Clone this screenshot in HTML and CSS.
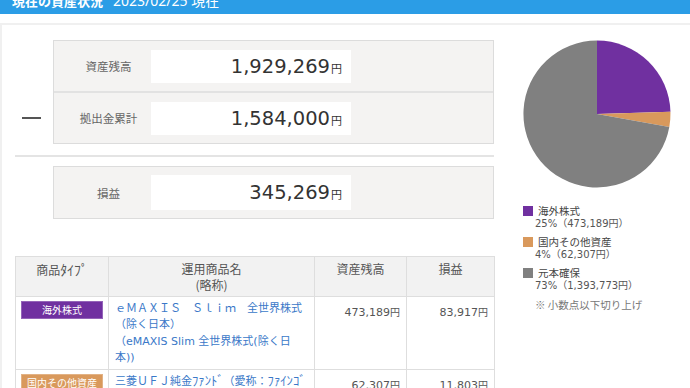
FILE: index.html
```html
<!DOCTYPE html>
<html lang="ja">
<head>
  <meta charset="UTF-8" />
  <meta name="viewport" content="width=device-width, initial-scale=1.0"/>
  <title>現在の資産状況</title>
  <link rel="stylesheet" href="styles.css">
</head>
<body>

  <header class="title-bar">
    <h2><strong>現在の資産状況</strong><span class="date">2023/02/25 現在</span></h2>
  </header>

  <section class="panel">
    <div class="left-col">

      <div class="calc-row">
        <div class="sign"><span class="minus"></span></div>
        <div class="sum-box">
          <div class="sum-row">
            <div class="sum-label">資産残高</div>
            <div class="sum-value">1,929,269<small>円</small></div>
          </div>
          <div class="sum-row">
            <div class="sum-label">拠出金累計</div>
            <div class="sum-value">1,584,000<small>円</small></div>
          </div>
        </div>
      </div>

      <hr class="sum-line">

      <div class="calc-row">
        <div class="sign"></div>
        <div class="sum-box">
          <div class="sum-row total">
            <div class="sum-label">損益</div>
            <div class="sum-value">345,269<small>円</small></div>
          </div>
        </div>
      </div>

      <table class="fund-table">
        <colgroup>
          <col class="c-type"><col class="c-name"><col class="c-bal"><col class="c-pl">
        </colgroup>
        <thead>
          <tr>
            <th>商品<span class="kana">ﾀｲﾌﾟ</span></th>
            <th>運用商品名<br>(略称)</th>
            <th>資産残高</th>
            <th>損益</th>
          </tr>
        </thead>
        <tbody>
          <tr>
            <td><span class="badge foreign">海外株式</span></td>
            <td><a href="#">ｅＭＡＸＩＳ　Ｓｌｉｍ　全世界株式（除く日本）<br>（eMAXIS Slim 全世界株式(除く日本))</a></td>
            <td class="num">473,189<small>円</small></td>
            <td class="num">83,917<small>円</small></td>
          </tr>
          <tr>
            <td><span class="badge domestic">国内その他資産</span></td>
            <td><a href="#">三菱ＵＦＪ純金<span class="kana">ﾌｧﾝﾄﾞ</span>（愛称：<span class="kana">ﾌｧｲﾝｺﾞｰﾙﾄﾞ</span>）</a></td>
            <td class="num">62,307<small>円</small></td>
            <td class="num">11,803<small>円</small></td>
          </tr>
        </tbody>
      </table>
    </div>

    <div class="right-col">
      <svg class="pie" width="148" height="148" viewBox="0 0 148 148">
        <path d="M74,74 L74,0.5 A73.5,73.5 0 0,1 147.47,71.8 Z" fill="#7030a0"/>
        <path d="M74,74 L147.47,71.8 A73.5,73.5 0 0,1 146.3,87 Z" fill="#d9995c"/>
        <path d="M74,74 L146.3,87 A73.5,73.5 0 1,1 74,0.5 Z" fill="#808080"/>
      </svg>

      <ul class="legend">
        <li>
          <span class="sq foreign"></span>海外株式
          <span class="pct">25%（473,189円）</span>
        </li>
        <li>
          <span class="sq domestic"></span>国内その他資産
          <span class="pct">4%（62,307円）</span>
        </li>
        <li>
          <span class="sq principal"></span>元本確保
          <span class="pct">73%（1,393,773円）</span>
        </li>
      </ul>
      <p class="note">※ 小数点以下切り上げ</p>
    </div>
  </section>

</body>
</html>
```

FILE: styles.css
```css
body {
  margin: 0;
  font-family: "Noto Sans CJK JP", sans-serif;
  background: #fff;
  color: #444;
  overflow: hidden;
}

.title-bar {
  height: 14px;
  background-color: #2b9de6;
  overflow: hidden;
}

.title-bar h2 {
  margin: -6px 0 0 12px;
  font-size: 13px;
  line-height: 14px;
  font-weight: normal;
  color: #fff;
}

.title-bar strong {
  font-weight: bold;
  margin-right: 10px;
}

.title-bar .date {
  font-family: "Noto Sans", "Noto Sans CJK JP", sans-serif;
  font-size: 14px;
}

.panel {
  display: flex;
  margin-top: 9px;
  border-top: 2px solid #f0f0f0;
  border-left: 2px solid #f0f0f0;
  padding: 15px 0 0 13px;
}

.left-col {
  width: 479px;
}

.calc-row {
  display: flex;
}

.sign {
  width: 38px;
  display: flex;
  align-items: flex-end;
}

.minus {
  display: block;
  width: 19px;
  height: 2px;
  margin: 0 0 25px 7px;
  background: #555;
}

.sum-box {
  flex: 1;
  background: #f4f3f2;
  border: 1px solid #dcdcdc;
}

.sum-row {
  display: flex;
  align-items: center;
  height: 50px;
}

.sum-row + .sum-row {
  border-top: 2px solid #e2e2e2;
}

.sum-row.total {
  height: 51px;
}

.sum-label {
  width: 85px;
  padding-left: 12px;
  text-align: center;
  font-size: 11.5px;
  color: #666;
}

.sum-value {
  width: 191px;
  height: 33px;
  padding-right: 9px;
  background: #fff;
  text-align: right;
  font-family: "DejaVu Sans", sans-serif;
  font-size: 19.5px;
  line-height: 34px;
  color: #333;
}

.total .sum-value {
  height: 35px;
  line-height: 36px;
}

.sum-value small {
  font-family: "Noto Sans CJK JP", sans-serif;
  font-size: 11px;
  margin-left: 1px;
}

.sum-line {
  margin: 11px 0 9px;
  border: none;
  border-top: 2px solid #e4e4e4;
}

.fund-table {
  width: 479px;
  margin-top: 37px;
  border-collapse: collapse;
  table-layout: fixed;
  font-size: 11px;
  line-height: 15.4px;
}

.c-type { width: 93px; }
.c-name { width: 206px; }
.c-bal { width: 92px; }
.c-pl { width: 88px; }

.fund-table th,
.fund-table td {
  border: 1px solid #dedede;
  vertical-align: top;
}

.fund-table th {
  background: #f2f2f2;
  font-weight: normal;
  color: #555;
  padding: 4px 4px 3px;
  line-height: 16px;
  font-size: 12px;
}

.fund-table td {
  padding: 3px 5px 3px 6px;
}

.fund-table td:first-child {
  padding: 4px 5px;
}

.fund-table a {
  font-family: "DejaVu Sans", "Noto Sans CJK JP", sans-serif;
  color: #3a78c8;
  text-decoration: none;
}

.kana {
  font-size: 1.15em;
}

.fund-table .num {
  text-align: right;
  font-family: "DejaVu Sans", sans-serif;
  font-size: 11px;
  color: #555;
  padding-top: 7px;
  padding-right: 6px;
}

.num small {
  font-family: "Noto Sans CJK JP", sans-serif;
  font-size: 10px;
}

.badge {
  display: block;
  height: 18px;
  line-height: 18px;
  text-align: center;
  font-size: 10px;
  color: #fff;
  box-shadow: inset 0 0 0 1px rgba(255, 255, 255, 0.25);
}

.badge.foreign,
.sq.foreign {
  background: #7030a0;
}

.badge.domestic,
.sq.domestic {
  background: #d9995c;
}

.right-col {
  padding-left: 29px;
}

.pie {
  display: block;
}

.legend {
  list-style: none;
  margin: 16px 0 0;
  padding: 0;
  font-size: 10.5px;
  line-height: 13px;
  color: #444;
}

.legend li {
  margin-bottom: 5px;
}

.sq {
  display: inline-block;
  width: 10px;
  height: 10px;
  margin-right: 5px;
  vertical-align: -1px;
}

.sq.principal {
  background: #808080;
}

.pct {
  display: block;
  margin-left: 12px;
  font-family: "DejaVu Sans", "Noto Sans CJK JP", sans-serif;
  font-size: 10px;
  color: #555;
}

.note {
  margin: 0 0 0 12px;
  font-size: 10.5px;
  color: #777;
}
```
